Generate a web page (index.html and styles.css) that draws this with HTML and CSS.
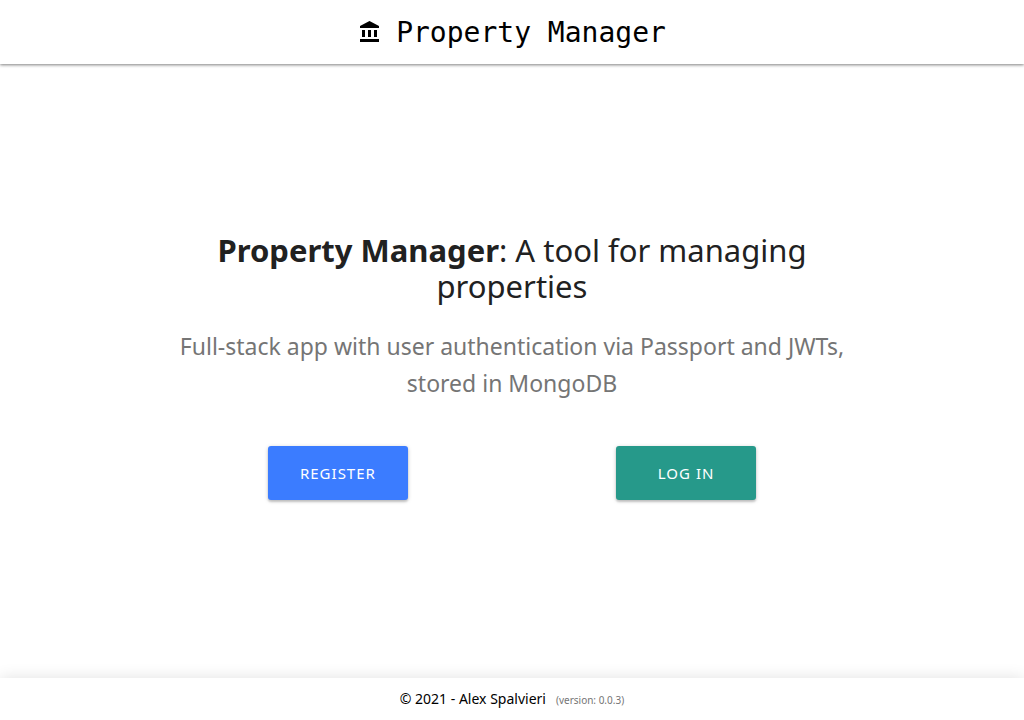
FILE: index.html
```html
<!DOCTYPE html>
<html lang="en">
<head>
<meta charset="utf-8">
<meta name="viewport" content="width=device-width, initial-scale=1">
<title>Property Manager</title>
<link rel="stylesheet" href="styles.css">
</head>
<body>
<header class="navbar">
  <a class="brand" href="#">
    <svg class="brand-icon" viewBox="0 0 24 24" aria-hidden="true"><path d="M4 10v7h3v-7H4zm6 0v7h3v-7h-3zM2 22h19v-3H2v3zm14-12v7h3v-7h-3zm-4.500-9L2 6v2h19V6l-9.500-5z"/></svg>
    <span class="brand-name">Property Manager</span>
  </a>
</header>
<main class="landing">
  <div class="content">
    <h1 class="title"><b>Property Manager</b>: A tool for managing properties</h1>
    <p class="lead">Full-stack app with user authentication via Passport and JWTs, stored in MongoDB</p>
    <div class="actions">
      <a class="btn btn-register" href="#register">Register</a>
      <a class="btn btn-login" href="#login">Log in</a>
    </div>
  </div>
</main>
<footer class="footer">
  <span>© 2021 - Alex Spalvieri</span>
  <small class="version">(version: 0.0.3)</small>
</footer>
</body>
</html>
```
FILE: styles.css
```css
* { box-sizing: border-box; }
body {
  margin: 0;
  min-height: 100vh;
  display: flex;
  flex-direction: column;
  background: #fff;
  color: #212121;
  font-family: "Segoe UI", "Noto Sans", sans-serif;
}
.navbar {
  height: 64px;
  display: flex;
  align-items: center;
  justify-content: center;
  box-shadow: 0 1px 3px rgba(0, 0, 0, .5);
}
.brand {
  display: flex;
  align-items: center;
  gap: 14px;
  color: #000;
  font: 28px/32px "DejaVu Sans Mono", monospace;
  text-decoration: none;
}
.brand-icon { width: 24px; height: 24px; }
.brand-name { padding-top: 2px; }
.landing {
  flex: 1;
  display: flex;
  align-items: center;
  justify-content: center;
  padding-bottom: 11px;
}
.content { width: 68%; text-align: center; }
.title {
  margin: 0 0 24px;
  padding: 0 24px;
  font-size: 31px;
  line-height: 36px;
  font-weight: 400;
}
.title b { font-weight: 700; }
.lead {
  margin: 0;
  color: #757575;
  font-size: 23px;
  line-height: 37px;
}
.actions {
  display: grid;
  grid-template-columns: 1fr 1fr;
  justify-items: center;
  margin-top: 44px;
}
.btn {
  width: 140px;
  border-radius: 3px;
  color: #fff;
  font-size: 15px;
  line-height: 54px;
  letter-spacing: 1px;
  text-transform: uppercase;
  text-decoration: none;
  box-shadow: 0 2px 2px rgba(0, 0, 0, .14), 0 1px 4px rgba(0, 0, 0, .2);
}
.btn-register { background: #3b7cff; }
.btn-login { background: #26998a; }
.footer {
  height: 42px;
  display: flex;
  align-items: baseline;
  justify-content: center;
  gap: 10px;
  color: #000;
  font-size: 14px;
  line-height: 42px;
  box-shadow: 0 0 16px rgba(0, 0, 0, .12);
}
.version { color: #757575; font-size: 10px; }
```
